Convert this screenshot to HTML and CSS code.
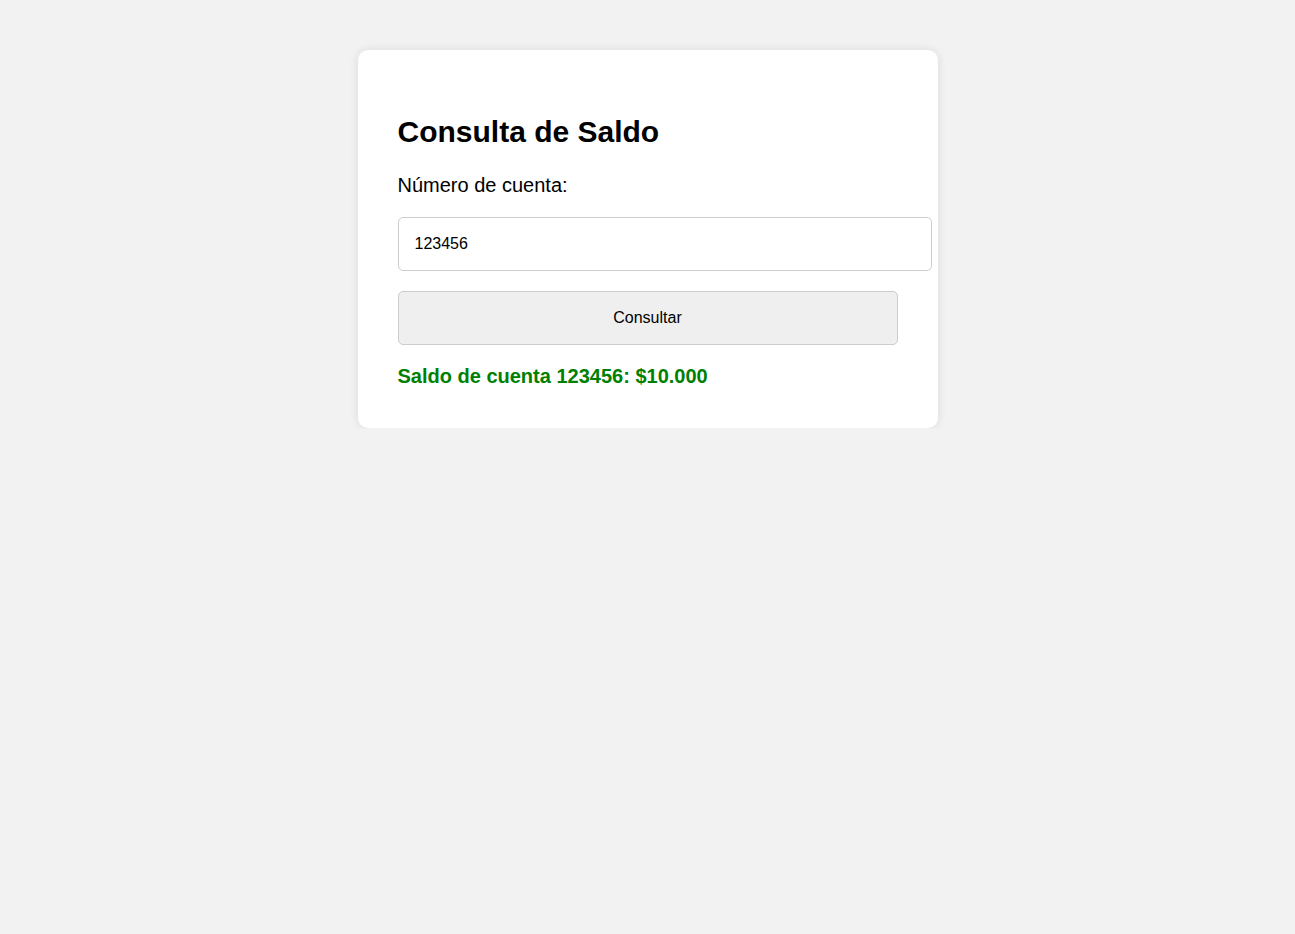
FILE: index.html
```html
<!DOCTYPE html>
<html lang="es">
<head>
<meta charset="utf-8">
<title>Consulta de Saldo</title>
<link rel="stylesheet" href="styles.css">
</head>
<body>
<div class="card">
  <h2 class="title">Consulta de Saldo</h2>
  <label class="label" for="cuenta">Número de cuenta:</label>
  <input class="input" id="cuenta" type="text" value="123456">
  <button class="button" type="button">Consultar</button>
  <p class="result">Saldo de cuenta 123456: $10.000</p>
</div>
</body>
</html>
```

FILE: styles.css
```css
html, body {
  margin: 0;
  padding: 0;
}
body {
  background: #f2f2f2;
  font-family: "Liberation Sans", Arial, sans-serif;
  color: #000;
  padding-top: 50px;
}
.card {
  width: 500px;
  margin: 0 auto;
  background: #fff;
  padding: 40px;
  border-radius: 10px;
  box-shadow: 0 0 10px rgba(0, 0, 0, 0.1);
}
.title {
  font-size: 30px;
  font-weight: bold;
  margin: 25px 0;
}
.label {
  display: block;
  font-size: 20px;
  margin-bottom: 20px;
}
.input {
  display: block;
  width: 100%;
  padding: 17px 16px;
  font-family: "Liberation Sans", Arial, sans-serif;
  font-size: 16px;
  line-height: 18px;
  border: 1px solid #ccc;
  border-radius: 5px;
  margin: 0 0 20px;
  color: #000;
}
.button {
  display: block;
  width: 100%;
  height: 54px;
  padding: 0 16px;
  font-family: "Liberation Sans", Arial, sans-serif;
  font-size: 16px;
  background: #efefef;
  border: 1px solid #ccc;
  border-radius: 5px;
  color: #000;
  margin: 0;
}
.result {
  font-size: 20px;
  font-weight: bold;
  color: #008000;
  margin: 20px 0 0;
}
```
